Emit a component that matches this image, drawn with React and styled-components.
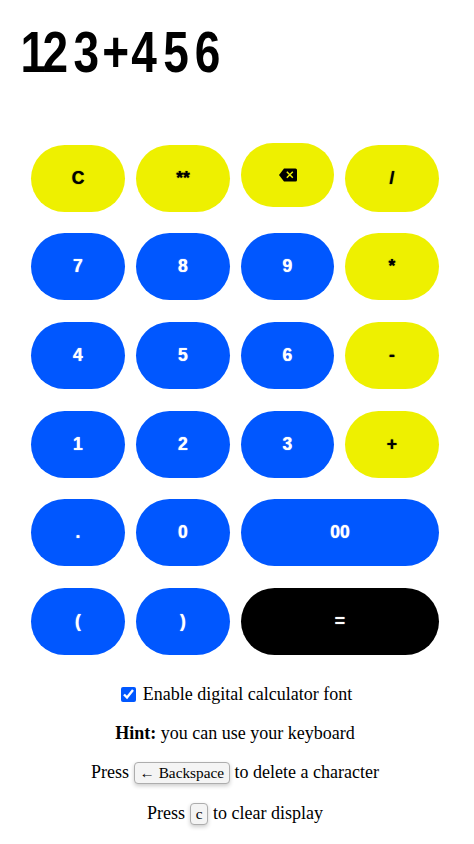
import React from 'react'
import styled, { createGlobalStyle } from 'styled-components'

const GlobalStyle = createGlobalStyle`
    html, body {
        margin: 0;
        padding: 0;
        background: #fff;
    }
    body {
        font-family: "Liberation Serif", "Times New Roman", serif;
        font-size: 18px;
        color: #000;
    }
`

const keys = [
    { label: 'C', kind: 'op' },
    { label: '**', kind: 'op' },
    { label: 'back', kind: 'op', short: true },
    { label: '/', kind: 'op' },
    { label: '7' },
    { label: '8' },
    { label: '9' },
    { label: '*', kind: 'op' },
    { label: '4' },
    { label: '5' },
    { label: '6' },
    { label: '-', kind: 'op' },
    { label: '1' },
    { label: '2' },
    { label: '3' },
    { label: '+', kind: 'op' },
    { label: '.' },
    { label: '0' },
    { label: '00', wide: true },
    { label: '(' },
    { label: ')' },
    { label: '=', kind: 'equals', wide: true },
]

// the calculator font has a narrow 1, so each char gets its own spacing
const displayChars = [
    { char: '1', spacing: -3.6 },
    { char: '2', spacing: 5.4 },
    { char: '3', spacing: 3.2 },
    { char: '+', spacing: 2.2 },
    { char: '4', spacing: 6.4 },
    { char: '5', spacing: 5.9 },
    { char: '6', spacing: 0 },
]

function BackspaceIcon() {
    return (
        <svg width="20" height="16" viewBox="0 0 20 16">
            <path d="M6 1.5h11.5a1.5 1.5 0 0 1 1.5 1.5v10a1.5 1.5 0 0 1-1.5 1.5H6L1 8z" fill="#000" />
            <path d="M8.8 4.8l6 6M14.8 4.8l-6 6" stroke="#eef000" strokeWidth="1.5" fill="none" />
        </svg>
    )
}

export default function App() {
    return (
        <Page>
            <GlobalStyle />
            <DisplayArea>
                <Display>
                    {displayChars.map((item, i) => (
                        <DisplayChar key={i} $spacing={item.spacing}>{item.char}</DisplayChar>
                    ))}
                </Display>
            </DisplayArea>
            <Keypad>
                {keys.map((key) => (
                    <Key key={key.label} $kind={key.kind} $wide={key.wide} $short={key.short}>
                        {key.label === 'back' ? <BackspaceIcon /> : key.label}
                    </Key>
                ))}
            </Keypad>
            <Notes>
                <Note>
                    <Check type="checkbox" defaultChecked readOnly />
                    Enable digital calculator font
                </Note>
                <Note><strong>Hint:</strong> you can use your keyboard</Note>
                <Note>Press <Kbd>← Backspace</Kbd> to delete a character</Note>
                <Note>Press <Kbd>c</Kbd> to clear display</Note>
            </Notes>
        </Page>
    )
}

const Page = styled.div`
    width: 474px;
    height: 844px;
    overflow: hidden;
    padding: 0 35px 0 31px;
    box-sizing: border-box;
`
const DisplayArea = styled.div`
    height: 143px;
    padding-top: 16px;
    box-sizing: border-box;
`
const Display = styled.div`
    font-family: "Liberation Sans", Arial, sans-serif;
    font-weight: 700;
    font-size: 46px;
    line-height: 58px;
    margin-left: -10.5px;
    white-space: nowrap;
    transform: scaleY(1.25);
    transform-origin: left top;
`
const DisplayChar = styled.span`
    letter-spacing: ${(p) => p.$spacing}px;
`
const Keypad = styled.div`
    display: grid;
    grid-template-columns: 94px 94px 93px 94px;
    grid-auto-rows: 67px;
    column-gap: 11px;
    row-gap: 21.6px;
    margin-top: 1.8px;
`
const keyColors = {
    op: 'background: #eef000; color: #000;',
    equals: 'background: #000; color: #fff;',
}
const Key = styled.button`
    border: 0;
    padding: 0;
    border-radius: 34px;
    font-family: "Liberation Sans", Arial, sans-serif;
    font-weight: 700;
    font-size: 17.6px;
    text-shadow: 0 0 1px currentColor;
    display: flex;
    align-items: center;
    justify-content: center;
    background: #0057ff;
    color: #fff;
    ${(p) => keyColors[p.$kind] || ''}
    ${(p) => p.$wide && 'grid-column: span 2;'}
    ${(p) => p.$short && 'height: 64px; margin-top: -2px;'}
`
const Notes = styled.div`
    margin-top: 29px;
    display: flex;
    flex-direction: column;
    align-items: center;
    gap: 18.3px;
    width: 408px;
    line-height: 21px;
`
const Note = styled.div`
    white-space: nowrap;
`
const Check = styled.input`
    width: 15px;
    height: 15px;
    margin: 0 7px 0 3px;
    vertical-align: -2px;
    accent-color: #0057ff;
`
const Kbd = styled.kbd`
    display: inline-block;
    font-family: "Liberation Serif", "Times New Roman", serif;
    font-size: 15.3px;
    line-height: 18px;
    padding: 1px 5px;
    background: #f4f4f4;
    border: 1px solid #adadad;
    border-radius: 4px;
    box-shadow: 0 2px 4px rgba(0, 0, 0, 0.2);
`
